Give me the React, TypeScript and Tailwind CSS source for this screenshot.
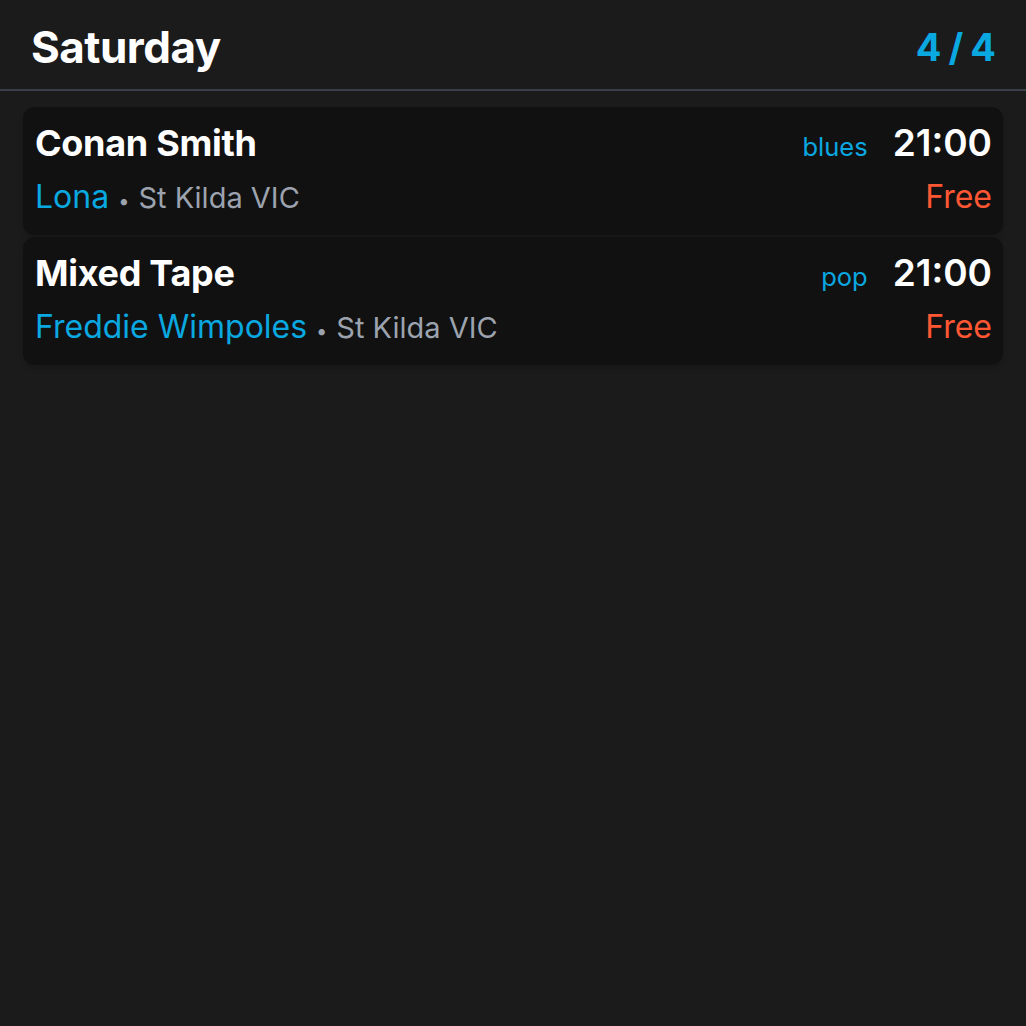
const gigs = [
  { id: 1, artist: "Conan Smith", venue: "Lona", suburb: "St Kilda VIC", genre: "blues", time: "21:00", price: "Free" },
  { id: 2, artist: "Mixed Tape", venue: "Freddie Wimpoles", suburb: "St Kilda VIC", genre: "pop", time: "21:00", price: "Free" },
];

export default function App() {
  return (
    <div className="min-h-screen bg-[#1b1b1b] font-['Inter',sans-serif] text-white">
      {/* Header */}
      <div className="flex items-center justify-between h-[91px] pt-[4px] px-[31px] border-b-2 border-[#3a3f4a]">
        <h1 className="text-[44px] font-bold tracking-[-0.5px] leading-none">Saturday</h1>
        <span className="text-[38px] font-bold text-[#0aa8e0] leading-none tracking-[-1px]">4 / 4</span>
      </div>

      {/* Gigs */}
      <div className="flex flex-col gap-[2px] px-[23px] pt-[16px]">
        {gigs.map((gig) => (
          <div
            key={gig.id}
            className="bg-[#111111] rounded-[12px] h-[128px] pl-[12px] pr-[11px] flex flex-col justify-center gap-[10px] shadow-md"
          >
            <div className="flex items-baseline justify-between">
              <span className="text-[36px] font-bold tracking-[-0.3px] leading-[42px]">{gig.artist}</span>
              <div className="flex items-baseline gap-[25px]">
                <span className="text-[25.5px] text-[#0aa8e0]">{gig.genre}</span>
                <span className="text-[37px] font-semibold leading-[42px]">{gig.time}</span>
              </div>
            </div>
            <div className="flex items-baseline justify-between">
              <div className="flex items-baseline">
                <span className="text-[32px] text-[#0aa8e0] leading-[40px]">{gig.venue}</span>
                <span className="text-[20px] text-[#9ca3af] ml-[9px] mr-[9px]">•</span>
                <span className="text-[29px] text-[#9ca3af]">{gig.suburb}</span>
              </div>
              <span className="text-[32px] text-[#ff5733] leading-[40px]">{gig.price}</span>
            </div>
          </div>
        ))}
      </div>
    </div>
  );
}
